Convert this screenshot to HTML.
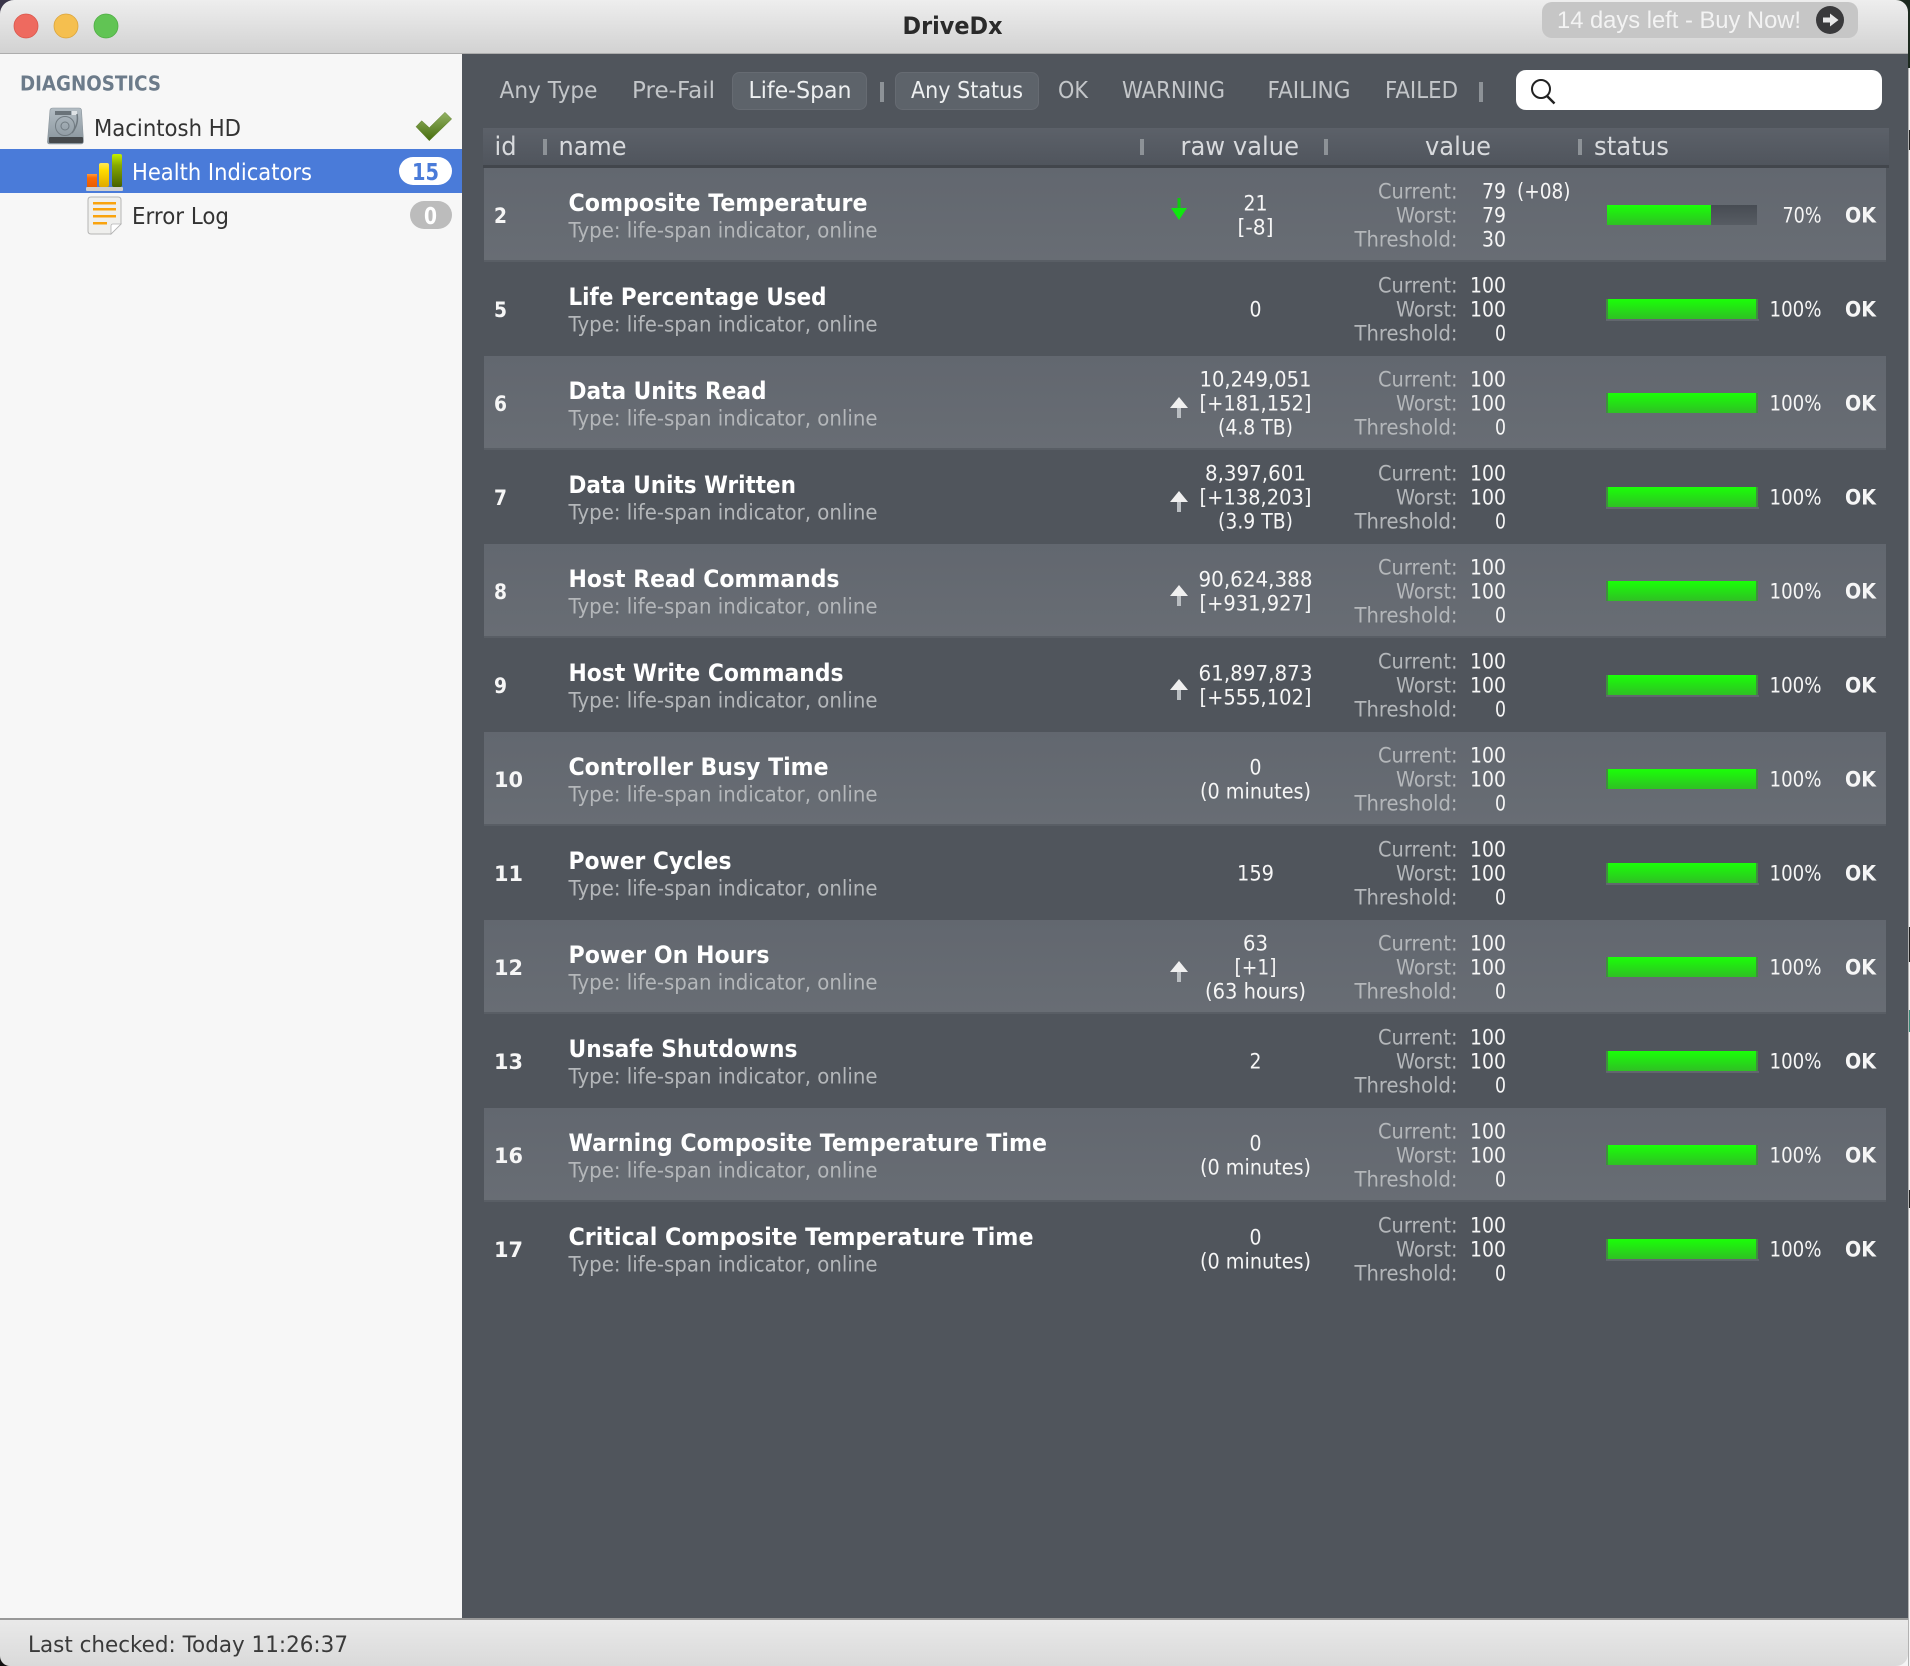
<!DOCTYPE html>
<html lang="en"><head><meta charset="utf-8"><title>DriveDx</title>
<style>
html,body{margin:0;padding:0;background:#f4f4f4;overflow:hidden}
svg{display:block}
text{font-family:"DejaVu Sans","Liberation Sans",sans-serif;fill:#f6f6f6;font-size:21px}
.t{font-weight:700;font-size:24px;fill:#fff}
.s{fill:#b4b7ba}
.i{font-weight:700;font-size:21px}
.l{fill:#b4b7ba;text-anchor:end}
.v{text-anchor:end}
.r{text-anchor:middle}
.p{text-anchor:end}
.o{font-weight:700}
.f{font-size:23px;fill:#c3c6c9}
.fa{font-size:23px;fill:#eef0f1}
.h{font-size:26px;fill:#d8dadd}
.m{font-size:23px;fill:#333}
</style></head><body>
<svg width="1910" height="1666" viewBox="0 0 1910 1666" xmlns="http://www.w3.org/2000/svg">
<defs>
<linearGradient id="tb" x1="0" y1="0" x2="0" y2="1"><stop offset="0" stop-color="#eeeeee"/><stop offset="1" stop-color="#d2d2d2"/></linearGradient>
<linearGradient id="sb" x1="0" y1="0" x2="0" y2="1"><stop offset="0" stop-color="#e9e9e9"/><stop offset="1" stop-color="#dadada"/></linearGradient>
<linearGradient id="hd" x1="0" y1="0" x2="0" y2="1"><stop offset="0" stop-color="#5c6169"/><stop offset="1" stop-color="#50555d"/></linearGradient>
<linearGradient id="lr" x1="0" y1="0" x2="0" y2="1"><stop offset="0" stop-color="#62676f"/><stop offset="1" stop-color="#686d74"/></linearGradient>
<linearGradient id="g" x1="0" y1="0" x2="0" y2="1"><stop offset="0" stop-color="#1aff08"/><stop offset="1" stop-color="#2fc024"/></linearGradient>
<linearGradient id="trk" x1="0" y1="0" x2="0" y2="1"><stop offset="0" stop-color="#474c53"/><stop offset="1" stop-color="#575c63"/></linearGradient>
<linearGradient id="chk" x1="0" y1="0" x2="0" y2="1"><stop offset="0" stop-color="#93b264"/><stop offset="1" stop-color="#466d0c"/></linearGradient>
<linearGradient id="disk" x1="0" y1="0" x2="0" y2="1"><stop offset="0" stop-color="#b3bdc4"/><stop offset="1" stop-color="#87939b"/></linearGradient>
<linearGradient id="b1" x1="0" y1="0" x2="0" y2="1"><stop offset="0" stop-color="#ff9a3a"/><stop offset=".3" stop-color="#fa6a06"/><stop offset="1" stop-color="#e85c00"/></linearGradient>
<linearGradient id="b2" x1="0" y1="0" x2="0" y2="1"><stop offset="0" stop-color="#ffe95a"/><stop offset=".3" stop-color="#ffdc00"/><stop offset="1" stop-color="#e0a800"/></linearGradient>
<linearGradient id="b3" x1="0" y1="0" x2="0" y2="1"><stop offset="0" stop-color="#c4f000"/><stop offset=".35" stop-color="#86a800"/><stop offset="1" stop-color="#466000"/></linearGradient>
</defs>

<!-- screen edges -->
<rect x="1908" y="0" width="1" height="1666" fill="#b2b2b2"/>
<rect x="1909" y="0" width="1" height="1666" fill="#f4f4f4"/>
<rect x="1908" y="0" width="2" height="68" fill="#1d2a1f"/>
<rect x="1909" y="130" width="1" height="20" fill="#222"/>
<rect x="1909" y="927" width="1" height="35" fill="#222"/>
<rect x="1909" y="1010" width="1" height="22" fill="#3a8a78"/>
<rect x="1909" y="1190" width="1" height="18" fill="#222"/>

<!-- title bar -->
<rect x="0" y="0" width="1908" height="53" fill="url(#tb)"/>
<rect x="0" y="53" width="1908" height="1" fill="#adadad"/>
<circle cx="26" cy="26" r="12" fill="#ee6a5f" stroke="#d9574c" stroke-width=".8"/>
<circle cx="66" cy="26" r="12" fill="#f5bf4f" stroke="#dba53c" stroke-width=".8"/>
<circle cx="106" cy="26" r="12" fill="#61c454" stroke="#50ad45" stroke-width=".8"/>
<text x="902.500" y="34" style="font-weight:700;font-size:24px;fill:#2a2a2a" textLength="100" lengthAdjust="spacingAndGlyphs">DriveDx</text>
<rect x="1542" y="2" width="316" height="36" rx="10" fill="#c6c6c6"/>
<text x="1557" y="28" style="font-family:'Liberation Sans',sans-serif;font-size:24px;fill:#f3f3f3" textLength="244" lengthAdjust="spacingAndGlyphs">14 days left - Buy Now!</text>
<circle cx="1830" cy="20" r="14" fill="#3a3a3c"/>
<path d="M1823 17.500h7v-4l8.500 6.500-8.500 6.500v-4h-7z" fill="#e8e8e8"/>

<!-- sidebar -->
<rect x="0" y="54" width="462" height="1564" fill="#f7f7f7"/>
<text x="20" y="90.500" style="font-weight:700;font-size:20px;fill:#6c7b8a" textLength="141" lengthAdjust="spacingAndGlyphs">DIAGNOSTICS</text>
<path d="M53 108h26q2 0 2.500 2l2 31q0 3-3 3H50q-3 0-2.500-3l2.500-31q.5-2 3-2z" fill="url(#disk)" stroke="#8b959c" stroke-width=".6"/>
<rect x="55" y="111" width="16" height="4" fill="#6a7379"/>
<rect x="72" y="111" width="5" height="4" fill="#dfe3e6"/>
<circle cx="65" cy="126" r="9.500" fill="none" stroke="#717b82" stroke-width="1"/>
<circle cx="65" cy="126" r="4" fill="none" stroke="#717b82" stroke-width="1"/>
<path d="M77 114q2 10-5 19" fill="none" stroke="#6e787f" stroke-width="1.500"/>
<rect x="49" y="137" width="34" height="6" rx="1" fill="#45494c"/>
<text x="94" y="136" class="m" textLength="147" lengthAdjust="spacingAndGlyphs">Macintosh HD</text>
<path d="M416 126.700l5.700-6 7.600 7L445 112.300l6.700 6.700-22.400 21.700z" fill="url(#chk)" stroke="#5d7d2a" stroke-width=".5"/>

<rect x="0" y="149" width="462" height="44" fill="#4a7bd9"/>
<rect x="87" y="174" width="10" height="13" fill="url(#b1)"/>
<rect x="99" y="163" width="10" height="24" rx="2" fill="url(#b2)"/>
<rect x="112" y="154" width="10" height="33" rx="2" fill="url(#b3)"/>
<rect x="86" y="187" width="37" height="4" rx="1" fill="#cfcfcf"/>
<text x="132" y="180" class="m" style="fill:#fff" textLength="180" lengthAdjust="spacingAndGlyphs">Health Indicators</text>
<rect x="399" y="157" width="53" height="28" rx="14" fill="#fff"/>
<text x="412" y="180" style="font-weight:700;font-size:23px;fill:#4a7bd9" textLength="27" lengthAdjust="spacingAndGlyphs">15</text>

<path d="M91 197h27q3 0 3 3v24l-10 10H91q-3 0-3-3v-31q0-3 3-3z" fill="#efefed" stroke="#b4b4b4"/>
<path d="M121 224l-10 10v-8q0-2 2-2z" fill="#fff" stroke="#b4b4b4" stroke-width=".8"/>
<rect x="93" y="202" width="23" height="2.500" fill="#f9a30e"/>
<rect x="93" y="208" width="23" height="2.500" fill="#f9a30e"/>
<rect x="93" y="215" width="23" height="2.500" fill="#f9a30e"/>
<rect x="93" y="222" width="14" height="2.500" fill="#f9a30e"/>
<text x="132" y="224" class="m" textLength="97" lengthAdjust="spacingAndGlyphs">Error Log</text>
<rect x="410" y="201" width="42" height="28" rx="14" fill="#bcbcbc"/>
<text x="424" y="224" style="font-weight:700;font-size:23px;fill:#fff" textLength="13" lengthAdjust="spacingAndGlyphs">0</text>

<!-- main -->
<rect x="462" y="54" width="1446" height="1564" fill="#50555c"/>
<text x="499.500" y="98" class="f" textLength="98" lengthAdjust="spacingAndGlyphs">Any Type</text>
<text x="632" y="98" class="f" textLength="83" lengthAdjust="spacingAndGlyphs">Pre-Fail</text>
<rect x="732.500" y="72.500" width="134" height="37" rx="7" fill="#5d636a" stroke="#666b72"/>
<text x="748.500" y="98" class="fa" textLength="103" lengthAdjust="spacingAndGlyphs">Life-Span</text>
<rect x="880" y="82" width="4" height="20" fill="#8d9297"/>
<rect x="895.500" y="72.500" width="143" height="37" rx="7" fill="#5d636a" stroke="#666b72"/>
<text x="911" y="98" class="fa" textLength="112" lengthAdjust="spacingAndGlyphs">Any Status</text>
<text x="1058" y="98" class="f" textLength="30" lengthAdjust="spacingAndGlyphs">OK</text>
<text x="1122" y="98" class="f" textLength="103" lengthAdjust="spacingAndGlyphs">WARNING</text>
<text x="1267.500" y="98" class="f" textLength="83" lengthAdjust="spacingAndGlyphs">FAILING</text>
<text x="1385" y="98" class="f" textLength="73" lengthAdjust="spacingAndGlyphs">FAILED</text>
<rect x="1479" y="82" width="4" height="20" fill="#8d9297"/>
<rect x="1516" y="70" width="366" height="40" rx="10" fill="#fff"/>
<circle cx="1541" cy="89" r="9" fill="none" stroke="#222" stroke-width="2"/>
<path d="M1547 96l7.500 7.500" stroke="#222" stroke-width="2.500" fill="none"/>

<!-- table header -->
<rect x="483" y="128" width="1406" height="37" fill="url(#hd)"/>
<rect x="483" y="165" width="1406" height="3" fill="#42464c"/>
<text x="494.500" y="155" class="h" textLength="22" lengthAdjust="spacingAndGlyphs">id</text>
<rect x="543" y="139" width="4" height="16" fill="#8d9297"/>
<text x="558.500" y="155" class="h" textLength="68" lengthAdjust="spacingAndGlyphs">name</text>
<rect x="1140" y="139" width="4" height="16" fill="#8d9297"/>
<text x="1180.500" y="155" class="h" textLength="118.500" lengthAdjust="spacingAndGlyphs">raw value</text>
<rect x="1324" y="139" width="4" height="16" fill="#8d9297"/>
<text x="1425" y="155" class="h" textLength="66" lengthAdjust="spacingAndGlyphs">value</text>
<rect x="1578" y="139" width="4" height="16" fill="#8d9297"/>
<text x="1594" y="155" class="h" textLength="75" lengthAdjust="spacingAndGlyphs">status</text>

<!-- row id 2 -->
<g transform="translate(0,168)">
<rect x="484" width="1402" height="92" fill="url(#lr)"/><rect x="484" y="92" width="1402" height="2" fill="#595e65"/>
<text x="494" y="55" class="i" textLength="13" lengthAdjust="spacingAndGlyphs">2</text>
<text x="568.500" y="43" class="t" textLength="299" lengthAdjust="spacingAndGlyphs">Composite Temperature</text>
<text x="568.500" y="69.500" class="s" textLength="309" lengthAdjust="spacingAndGlyphs">Type: life-span indicator, online</text>
<path d="M1177.500 30h3v10h-3z" fill="#12c812"/><path d="M1171 40h16l-8 12z" fill="#0ee80e"/>
<text x="1255.500" y="42.500" class="r" textLength="24" lengthAdjust="spacingAndGlyphs">21</text>
<text x="1255.500" y="66.500" class="r" textLength="36" lengthAdjust="spacingAndGlyphs">[-8]</text>
<text x="1457.500" y="30.500" class="l" textLength="79.500" lengthAdjust="spacingAndGlyphs">Current:</text>
<text x="1457.500" y="54.500" class="l" textLength="61.500" lengthAdjust="spacingAndGlyphs">Worst:</text>
<text x="1457.500" y="78.500" class="l" textLength="103" lengthAdjust="spacingAndGlyphs">Threshold:</text>
<text x="1506" y="30.500" class="v" textLength="24" lengthAdjust="spacingAndGlyphs">79</text>
<text x="1517" y="30.500" textLength="53.500" lengthAdjust="spacingAndGlyphs">(+08)</text>
<text x="1506" y="54.500" class="v" textLength="24" lengthAdjust="spacingAndGlyphs">79</text>
<text x="1506" y="78.500" class="v" textLength="24" lengthAdjust="spacingAndGlyphs">30</text>
<rect x="1607" y="37" width="150" height="20" fill="url(#trk)"/><rect x="1607" y="37" width="104" height="20" fill="url(#g)"/>
<text x="1821.500" y="54.500" class="p" textLength="39" lengthAdjust="spacingAndGlyphs">70%</text>
<text x="1845" y="54.500" class="o" textLength="31" lengthAdjust="spacingAndGlyphs">OK</text>
</g>

<!-- row id 5 -->
<g transform="translate(0,262)">
<text x="494" y="55" class="i" textLength="13" lengthAdjust="spacingAndGlyphs">5</text>
<text x="568.500" y="43" class="t" textLength="258" lengthAdjust="spacingAndGlyphs">Life Percentage Used</text>
<text x="568.500" y="69.500" class="s" textLength="309" lengthAdjust="spacingAndGlyphs">Type: life-span indicator, online</text>
<text x="1255.500" y="54.500" class="r" textLength="12" lengthAdjust="spacingAndGlyphs">0</text>
<text x="1457.500" y="30.500" class="l" textLength="79.500" lengthAdjust="spacingAndGlyphs">Current:</text>
<text x="1457.500" y="54.500" class="l" textLength="61.500" lengthAdjust="spacingAndGlyphs">Worst:</text>
<text x="1457.500" y="78.500" class="l" textLength="103" lengthAdjust="spacingAndGlyphs">Threshold:</text>
<text x="1506" y="30.500" class="v" textLength="36" lengthAdjust="spacingAndGlyphs">100</text>
<text x="1506" y="54.500" class="v" textLength="36" lengthAdjust="spacingAndGlyphs">100</text>
<text x="1506" y="78.500" class="v" textLength="11" lengthAdjust="spacingAndGlyphs">0</text>
<rect x="1606" y="57" width="153" height="2" fill="#62676e"/><rect x="1606" y="37" width="152" height="20" fill="#3f8f3f"/><rect x="1608" y="37" width="148" height="20" fill="url(#g)"/>
<text x="1821.500" y="54.500" class="p" textLength="52" lengthAdjust="spacingAndGlyphs">100%</text>
<text x="1845" y="54.500" class="o" textLength="31" lengthAdjust="spacingAndGlyphs">OK</text>
</g>

<!-- row id 6 -->
<g transform="translate(0,356)">
<rect x="484" width="1402" height="92" fill="url(#lr)"/><rect x="484" y="92" width="1402" height="2" fill="#595e65"/>
<text x="494" y="55" class="i" textLength="13" lengthAdjust="spacingAndGlyphs">6</text>
<text x="568.500" y="43" class="t" textLength="198" lengthAdjust="spacingAndGlyphs">Data Units Read</text>
<text x="568.500" y="69.500" class="s" textLength="309" lengthAdjust="spacingAndGlyphs">Type: life-span indicator, online</text>
<path d="M1177 52h4v10h-4z" fill="#b9bdc1"/><path d="M1179 41l9 11h-18z" fill="#f0f0f0"/>
<text x="1255.500" y="30.500" class="r" textLength="112" lengthAdjust="spacingAndGlyphs">10,249,051</text>
<text x="1255.500" y="54.500" class="r" textLength="112" lengthAdjust="spacingAndGlyphs">[+181,152]</text>
<text x="1255.500" y="78.500" class="r" textLength="75" lengthAdjust="spacingAndGlyphs">(4.8 TB)</text>
<text x="1457.500" y="30.500" class="l" textLength="79.500" lengthAdjust="spacingAndGlyphs">Current:</text>
<text x="1457.500" y="54.500" class="l" textLength="61.500" lengthAdjust="spacingAndGlyphs">Worst:</text>
<text x="1457.500" y="78.500" class="l" textLength="103" lengthAdjust="spacingAndGlyphs">Threshold:</text>
<text x="1506" y="30.500" class="v" textLength="36" lengthAdjust="spacingAndGlyphs">100</text>
<text x="1506" y="54.500" class="v" textLength="36" lengthAdjust="spacingAndGlyphs">100</text>
<text x="1506" y="78.500" class="v" textLength="11" lengthAdjust="spacingAndGlyphs">0</text>
<rect x="1606" y="37" width="152" height="20" fill="#3f8f3f"/><rect x="1608" y="37" width="148" height="20" fill="url(#g)"/>
<text x="1821.500" y="54.500" class="p" textLength="52" lengthAdjust="spacingAndGlyphs">100%</text>
<text x="1845" y="54.500" class="o" textLength="31" lengthAdjust="spacingAndGlyphs">OK</text>
</g>

<!-- row id 7 -->
<g transform="translate(0,450)">
<text x="494" y="55" class="i" textLength="13" lengthAdjust="spacingAndGlyphs">7</text>
<text x="568.500" y="43" class="t" textLength="227.500" lengthAdjust="spacingAndGlyphs">Data Units Written</text>
<text x="568.500" y="69.500" class="s" textLength="309" lengthAdjust="spacingAndGlyphs">Type: life-span indicator, online</text>
<path d="M1177 52h4v10h-4z" fill="#b9bdc1"/><path d="M1179 41l9 11h-18z" fill="#f0f0f0"/>
<text x="1255.500" y="30.500" class="r" textLength="101" lengthAdjust="spacingAndGlyphs">8,397,601</text>
<text x="1255.500" y="54.500" class="r" textLength="112" lengthAdjust="spacingAndGlyphs">[+138,203]</text>
<text x="1255.500" y="78.500" class="r" textLength="75" lengthAdjust="spacingAndGlyphs">(3.9 TB)</text>
<text x="1457.500" y="30.500" class="l" textLength="79.500" lengthAdjust="spacingAndGlyphs">Current:</text>
<text x="1457.500" y="54.500" class="l" textLength="61.500" lengthAdjust="spacingAndGlyphs">Worst:</text>
<text x="1457.500" y="78.500" class="l" textLength="103" lengthAdjust="spacingAndGlyphs">Threshold:</text>
<text x="1506" y="30.500" class="v" textLength="36" lengthAdjust="spacingAndGlyphs">100</text>
<text x="1506" y="54.500" class="v" textLength="36" lengthAdjust="spacingAndGlyphs">100</text>
<text x="1506" y="78.500" class="v" textLength="11" lengthAdjust="spacingAndGlyphs">0</text>
<rect x="1606" y="57" width="153" height="2" fill="#62676e"/><rect x="1606" y="37" width="152" height="20" fill="#3f8f3f"/><rect x="1608" y="37" width="148" height="20" fill="url(#g)"/>
<text x="1821.500" y="54.500" class="p" textLength="52" lengthAdjust="spacingAndGlyphs">100%</text>
<text x="1845" y="54.500" class="o" textLength="31" lengthAdjust="spacingAndGlyphs">OK</text>
</g>

<!-- row id 8 -->
<g transform="translate(0,544)">
<rect x="484" width="1402" height="92" fill="url(#lr)"/><rect x="484" y="92" width="1402" height="2" fill="#595e65"/>
<text x="494" y="55" class="i" textLength="13" lengthAdjust="spacingAndGlyphs">8</text>
<text x="568.500" y="43" class="t" textLength="271" lengthAdjust="spacingAndGlyphs">Host Read Commands</text>
<text x="568.500" y="69.500" class="s" textLength="309" lengthAdjust="spacingAndGlyphs">Type: life-span indicator, online</text>
<path d="M1177 52h4v10h-4z" fill="#b9bdc1"/><path d="M1179 41l9 11h-18z" fill="#f0f0f0"/>
<text x="1255.500" y="42.500" class="r" textLength="114" lengthAdjust="spacingAndGlyphs">90,624,388</text>
<text x="1255.500" y="66.500" class="r" textLength="112" lengthAdjust="spacingAndGlyphs">[+931,927]</text>
<text x="1457.500" y="30.500" class="l" textLength="79.500" lengthAdjust="spacingAndGlyphs">Current:</text>
<text x="1457.500" y="54.500" class="l" textLength="61.500" lengthAdjust="spacingAndGlyphs">Worst:</text>
<text x="1457.500" y="78.500" class="l" textLength="103" lengthAdjust="spacingAndGlyphs">Threshold:</text>
<text x="1506" y="30.500" class="v" textLength="36" lengthAdjust="spacingAndGlyphs">100</text>
<text x="1506" y="54.500" class="v" textLength="36" lengthAdjust="spacingAndGlyphs">100</text>
<text x="1506" y="78.500" class="v" textLength="11" lengthAdjust="spacingAndGlyphs">0</text>
<rect x="1606" y="37" width="152" height="20" fill="#3f8f3f"/><rect x="1608" y="37" width="148" height="20" fill="url(#g)"/>
<text x="1821.500" y="54.500" class="p" textLength="52" lengthAdjust="spacingAndGlyphs">100%</text>
<text x="1845" y="54.500" class="o" textLength="31" lengthAdjust="spacingAndGlyphs">OK</text>
</g>

<!-- row id 9 -->
<g transform="translate(0,638)">
<text x="494" y="55" class="i" textLength="13" lengthAdjust="spacingAndGlyphs">9</text>
<text x="568.500" y="43" class="t" textLength="275" lengthAdjust="spacingAndGlyphs">Host Write Commands</text>
<text x="568.500" y="69.500" class="s" textLength="309" lengthAdjust="spacingAndGlyphs">Type: life-span indicator, online</text>
<path d="M1177 52h4v10h-4z" fill="#b9bdc1"/><path d="M1179 41l9 11h-18z" fill="#f0f0f0"/>
<text x="1255.500" y="42.500" class="r" textLength="114" lengthAdjust="spacingAndGlyphs">61,897,873</text>
<text x="1255.500" y="66.500" class="r" textLength="112" lengthAdjust="spacingAndGlyphs">[+555,102]</text>
<text x="1457.500" y="30.500" class="l" textLength="79.500" lengthAdjust="spacingAndGlyphs">Current:</text>
<text x="1457.500" y="54.500" class="l" textLength="61.500" lengthAdjust="spacingAndGlyphs">Worst:</text>
<text x="1457.500" y="78.500" class="l" textLength="103" lengthAdjust="spacingAndGlyphs">Threshold:</text>
<text x="1506" y="30.500" class="v" textLength="36" lengthAdjust="spacingAndGlyphs">100</text>
<text x="1506" y="54.500" class="v" textLength="36" lengthAdjust="spacingAndGlyphs">100</text>
<text x="1506" y="78.500" class="v" textLength="11" lengthAdjust="spacingAndGlyphs">0</text>
<rect x="1606" y="57" width="153" height="2" fill="#62676e"/><rect x="1606" y="37" width="152" height="20" fill="#3f8f3f"/><rect x="1608" y="37" width="148" height="20" fill="url(#g)"/>
<text x="1821.500" y="54.500" class="p" textLength="52" lengthAdjust="spacingAndGlyphs">100%</text>
<text x="1845" y="54.500" class="o" textLength="31" lengthAdjust="spacingAndGlyphs">OK</text>
</g>

<!-- row id 10 -->
<g transform="translate(0,732)">
<rect x="484" width="1402" height="92" fill="url(#lr)"/><rect x="484" y="92" width="1402" height="2" fill="#595e65"/>
<text x="494" y="55" class="i" textLength="29" lengthAdjust="spacingAndGlyphs">10</text>
<text x="568.500" y="43" class="t" textLength="260" lengthAdjust="spacingAndGlyphs">Controller Busy Time</text>
<text x="568.500" y="69.500" class="s" textLength="309" lengthAdjust="spacingAndGlyphs">Type: life-span indicator, online</text>
<text x="1255.500" y="42.500" class="r" textLength="12" lengthAdjust="spacingAndGlyphs">0</text>
<text x="1255.500" y="66.500" class="r" textLength="111" lengthAdjust="spacingAndGlyphs">(0 minutes)</text>
<text x="1457.500" y="30.500" class="l" textLength="79.500" lengthAdjust="spacingAndGlyphs">Current:</text>
<text x="1457.500" y="54.500" class="l" textLength="61.500" lengthAdjust="spacingAndGlyphs">Worst:</text>
<text x="1457.500" y="78.500" class="l" textLength="103" lengthAdjust="spacingAndGlyphs">Threshold:</text>
<text x="1506" y="30.500" class="v" textLength="36" lengthAdjust="spacingAndGlyphs">100</text>
<text x="1506" y="54.500" class="v" textLength="36" lengthAdjust="spacingAndGlyphs">100</text>
<text x="1506" y="78.500" class="v" textLength="11" lengthAdjust="spacingAndGlyphs">0</text>
<rect x="1606" y="37" width="152" height="20" fill="#3f8f3f"/><rect x="1608" y="37" width="148" height="20" fill="url(#g)"/>
<text x="1821.500" y="54.500" class="p" textLength="52" lengthAdjust="spacingAndGlyphs">100%</text>
<text x="1845" y="54.500" class="o" textLength="31" lengthAdjust="spacingAndGlyphs">OK</text>
</g>

<!-- row id 11 -->
<g transform="translate(0,826)">
<text x="494" y="55" class="i" textLength="29" lengthAdjust="spacingAndGlyphs">11</text>
<text x="568.500" y="43" class="t" textLength="163" lengthAdjust="spacingAndGlyphs">Power Cycles</text>
<text x="568.500" y="69.500" class="s" textLength="309" lengthAdjust="spacingAndGlyphs">Type: life-span indicator, online</text>
<text x="1255.500" y="54.500" class="r" textLength="37" lengthAdjust="spacingAndGlyphs">159</text>
<text x="1457.500" y="30.500" class="l" textLength="79.500" lengthAdjust="spacingAndGlyphs">Current:</text>
<text x="1457.500" y="54.500" class="l" textLength="61.500" lengthAdjust="spacingAndGlyphs">Worst:</text>
<text x="1457.500" y="78.500" class="l" textLength="103" lengthAdjust="spacingAndGlyphs">Threshold:</text>
<text x="1506" y="30.500" class="v" textLength="36" lengthAdjust="spacingAndGlyphs">100</text>
<text x="1506" y="54.500" class="v" textLength="36" lengthAdjust="spacingAndGlyphs">100</text>
<text x="1506" y="78.500" class="v" textLength="11" lengthAdjust="spacingAndGlyphs">0</text>
<rect x="1606" y="57" width="153" height="2" fill="#62676e"/><rect x="1606" y="37" width="152" height="20" fill="#3f8f3f"/><rect x="1608" y="37" width="148" height="20" fill="url(#g)"/>
<text x="1821.500" y="54.500" class="p" textLength="52" lengthAdjust="spacingAndGlyphs">100%</text>
<text x="1845" y="54.500" class="o" textLength="31" lengthAdjust="spacingAndGlyphs">OK</text>
</g>

<!-- row id 12 -->
<g transform="translate(0,920)">
<rect x="484" width="1402" height="92" fill="url(#lr)"/><rect x="484" y="92" width="1402" height="2" fill="#595e65"/>
<text x="494" y="55" class="i" textLength="29" lengthAdjust="spacingAndGlyphs">12</text>
<text x="568.500" y="43" class="t" textLength="201" lengthAdjust="spacingAndGlyphs">Power On Hours</text>
<text x="568.500" y="69.500" class="s" textLength="309" lengthAdjust="spacingAndGlyphs">Type: life-span indicator, online</text>
<path d="M1177 52h4v10h-4z" fill="#b9bdc1"/><path d="M1179 41l9 11h-18z" fill="#f0f0f0"/>
<text x="1255.500" y="30.500" class="r" textLength="25" lengthAdjust="spacingAndGlyphs">63</text>
<text x="1255.500" y="54.500" class="r" textLength="42" lengthAdjust="spacingAndGlyphs">[+1]</text>
<text x="1255.500" y="78.500" class="r" textLength="101" lengthAdjust="spacingAndGlyphs">(63 hours)</text>
<text x="1457.500" y="30.500" class="l" textLength="79.500" lengthAdjust="spacingAndGlyphs">Current:</text>
<text x="1457.500" y="54.500" class="l" textLength="61.500" lengthAdjust="spacingAndGlyphs">Worst:</text>
<text x="1457.500" y="78.500" class="l" textLength="103" lengthAdjust="spacingAndGlyphs">Threshold:</text>
<text x="1506" y="30.500" class="v" textLength="36" lengthAdjust="spacingAndGlyphs">100</text>
<text x="1506" y="54.500" class="v" textLength="36" lengthAdjust="spacingAndGlyphs">100</text>
<text x="1506" y="78.500" class="v" textLength="11" lengthAdjust="spacingAndGlyphs">0</text>
<rect x="1606" y="37" width="152" height="20" fill="#3f8f3f"/><rect x="1608" y="37" width="148" height="20" fill="url(#g)"/>
<text x="1821.500" y="54.500" class="p" textLength="52" lengthAdjust="spacingAndGlyphs">100%</text>
<text x="1845" y="54.500" class="o" textLength="31" lengthAdjust="spacingAndGlyphs">OK</text>
</g>

<!-- row id 13 -->
<g transform="translate(0,1014)">
<text x="494" y="55" class="i" textLength="29" lengthAdjust="spacingAndGlyphs">13</text>
<text x="568.500" y="43" class="t" textLength="229" lengthAdjust="spacingAndGlyphs">Unsafe Shutdowns</text>
<text x="568.500" y="69.500" class="s" textLength="309" lengthAdjust="spacingAndGlyphs">Type: life-span indicator, online</text>
<text x="1255.500" y="54.500" class="r" textLength="12" lengthAdjust="spacingAndGlyphs">2</text>
<text x="1457.500" y="30.500" class="l" textLength="79.500" lengthAdjust="spacingAndGlyphs">Current:</text>
<text x="1457.500" y="54.500" class="l" textLength="61.500" lengthAdjust="spacingAndGlyphs">Worst:</text>
<text x="1457.500" y="78.500" class="l" textLength="103" lengthAdjust="spacingAndGlyphs">Threshold:</text>
<text x="1506" y="30.500" class="v" textLength="36" lengthAdjust="spacingAndGlyphs">100</text>
<text x="1506" y="54.500" class="v" textLength="36" lengthAdjust="spacingAndGlyphs">100</text>
<text x="1506" y="78.500" class="v" textLength="11" lengthAdjust="spacingAndGlyphs">0</text>
<rect x="1606" y="57" width="153" height="2" fill="#62676e"/><rect x="1606" y="37" width="152" height="20" fill="#3f8f3f"/><rect x="1608" y="37" width="148" height="20" fill="url(#g)"/>
<text x="1821.500" y="54.500" class="p" textLength="52" lengthAdjust="spacingAndGlyphs">100%</text>
<text x="1845" y="54.500" class="o" textLength="31" lengthAdjust="spacingAndGlyphs">OK</text>
</g>

<!-- row id 16 -->
<g transform="translate(0,1108)">
<rect x="484" width="1402" height="92" fill="url(#lr)"/><rect x="484" y="92" width="1402" height="2" fill="#595e65"/>
<text x="494" y="55" class="i" textLength="29" lengthAdjust="spacingAndGlyphs">16</text>
<text x="568.500" y="43" class="t" textLength="478.500" lengthAdjust="spacingAndGlyphs">Warning Composite Temperature Time</text>
<text x="568.500" y="69.500" class="s" textLength="309" lengthAdjust="spacingAndGlyphs">Type: life-span indicator, online</text>
<text x="1255.500" y="42.500" class="r" textLength="12" lengthAdjust="spacingAndGlyphs">0</text>
<text x="1255.500" y="66.500" class="r" textLength="111" lengthAdjust="spacingAndGlyphs">(0 minutes)</text>
<text x="1457.500" y="30.500" class="l" textLength="79.500" lengthAdjust="spacingAndGlyphs">Current:</text>
<text x="1457.500" y="54.500" class="l" textLength="61.500" lengthAdjust="spacingAndGlyphs">Worst:</text>
<text x="1457.500" y="78.500" class="l" textLength="103" lengthAdjust="spacingAndGlyphs">Threshold:</text>
<text x="1506" y="30.500" class="v" textLength="36" lengthAdjust="spacingAndGlyphs">100</text>
<text x="1506" y="54.500" class="v" textLength="36" lengthAdjust="spacingAndGlyphs">100</text>
<text x="1506" y="78.500" class="v" textLength="11" lengthAdjust="spacingAndGlyphs">0</text>
<rect x="1606" y="37" width="152" height="20" fill="#3f8f3f"/><rect x="1608" y="37" width="148" height="20" fill="url(#g)"/>
<text x="1821.500" y="54.500" class="p" textLength="52" lengthAdjust="spacingAndGlyphs">100%</text>
<text x="1845" y="54.500" class="o" textLength="31" lengthAdjust="spacingAndGlyphs">OK</text>
</g>

<!-- row id 17 -->
<g transform="translate(0,1202)">
<text x="494" y="55" class="i" textLength="29" lengthAdjust="spacingAndGlyphs">17</text>
<text x="568.500" y="43" class="t" textLength="465" lengthAdjust="spacingAndGlyphs">Critical Composite Temperature Time</text>
<text x="568.500" y="69.500" class="s" textLength="309" lengthAdjust="spacingAndGlyphs">Type: life-span indicator, online</text>
<text x="1255.500" y="42.500" class="r" textLength="12" lengthAdjust="spacingAndGlyphs">0</text>
<text x="1255.500" y="66.500" class="r" textLength="111" lengthAdjust="spacingAndGlyphs">(0 minutes)</text>
<text x="1457.500" y="30.500" class="l" textLength="79.500" lengthAdjust="spacingAndGlyphs">Current:</text>
<text x="1457.500" y="54.500" class="l" textLength="61.500" lengthAdjust="spacingAndGlyphs">Worst:</text>
<text x="1457.500" y="78.500" class="l" textLength="103" lengthAdjust="spacingAndGlyphs">Threshold:</text>
<text x="1506" y="30.500" class="v" textLength="36" lengthAdjust="spacingAndGlyphs">100</text>
<text x="1506" y="54.500" class="v" textLength="36" lengthAdjust="spacingAndGlyphs">100</text>
<text x="1506" y="78.500" class="v" textLength="11" lengthAdjust="spacingAndGlyphs">0</text>
<rect x="1606" y="57" width="153" height="2" fill="#62676e"/><rect x="1606" y="37" width="152" height="20" fill="#3f8f3f"/><rect x="1608" y="37" width="148" height="20" fill="url(#g)"/>
<text x="1821.500" y="54.500" class="p" textLength="52" lengthAdjust="spacingAndGlyphs">100%</text>
<text x="1845" y="54.500" class="o" textLength="31" lengthAdjust="spacingAndGlyphs">OK</text>
</g>

<!-- status bar -->
<rect x="0" y="1618" width="1908" height="2" fill="#999"/>
<rect x="0" y="1620" width="1908" height="46" fill="url(#sb)"/>
<text x="28" y="1652" style="font-size:22px;fill:#3a3a3a" textLength="320" lengthAdjust="spacingAndGlyphs">Last checked: Today 11:26:37</text>

<!-- corners -->
<path d="M0 0H14A14 14 0 0 0 0 14Z" fill="#3a3549"/>
<path d="M1896 0H1908V12A12 12 0 0 0 1896 0Z" fill="#1d2a1f"/>
<path d="M0 1656A10 10 0 0 0 10 1666H0Z" fill="#111"/>
<path d="M1908 1654A12 12 0 0 1 1896 1666H1908Z" fill="#f4f4f4"/>
</svg>
</body></html>
